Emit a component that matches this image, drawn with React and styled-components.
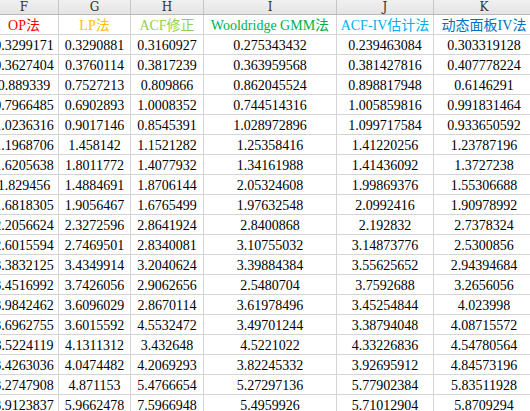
import React from "react";
import styled, { createGlobalStyle } from "styled-components";

const GlobalStyle = createGlobalStyle`
  html, body {
    margin: 0;
    padding: 0;
    background: #ffffff;
  }
  body {
    width: 530px;
    height: 411px;
    overflow: hidden;
  }
`

const columns = [
  { letter: "F", title: "OP法", color: "#ff0000", width: 69 },
  { letter: "G", title: "LP法", color: "#ffc000", width: 72 },
  { letter: "H", title: "ACF修正", color: "#92d050", width: 73 },
  { letter: "I", title: "Wooldridge GMM法", color: "#00b050", width: 133 },
  { letter: "J", title: "ACF-IV估计法", color: "#00b0f0", width: 97 },
  { letter: "K", title: "动态面板IV法", color: "#0070c0", width: 101 },
]

const rows = [
  ["0.3299171", "0.3290881", "0.3160927", "0.275343432", "0.239463084", "0.303319128"],
  ["0.3627404", "0.3760114", "0.3817239", "0.363959568", "0.381427816", "0.407778224"],
  ["0.889339", "0.7527213", "0.809866", "0.862045524", "0.898817948", "0.6146291"],
  ["0.7966485", "0.6902893", "1.0008352", "0.744514316", "1.005859816", "0.991831464"],
  ["1.0236316", "0.9017146", "0.8545391", "1.028972896", "1.099717584", "0.933650592"],
  ["1.1968706", "1.458142", "1.1521282", "1.25358416", "1.41220256", "1.23787196"],
  ["1.6205638", "1.8011772", "1.4077932", "1.34161988", "1.41436092", "1.3727238"],
  ["1.829456", "1.4884691", "1.8706144", "2.05324608", "1.99869376", "1.55306688"],
  ["1.6818305", "1.9056467", "1.6765499", "1.97632548", "2.0992416", "1.90978992"],
  ["2.2056624", "2.3272596", "2.8641924", "2.8400868", "2.192832", "2.7378324"],
  ["2.6015594", "2.7469501", "2.8340081", "3.10755032", "3.14873776", "2.5300856"],
  ["3.3832125", "3.4349914", "3.2040624", "3.39884384", "3.55625652", "2.94394684"],
  ["3.4516992", "3.7426056", "2.9062656", "2.5480704", "3.7592688", "3.2656056"],
  ["3.9842462", "3.6096029", "2.8670114", "3.61978496", "3.45254844", "4.023998"],
  ["3.6962755", "3.6015592", "4.5532472", "3.49701244", "3.38794048", "4.08715572"],
  ["3.5224119", "4.1311312", "3.432648", "4.5221022", "4.33226836", "4.54780564"],
  ["3.4263036", "4.0474482", "4.2069293", "3.82245332", "3.92695912", "4.84573196"],
  ["3.2747908", "4.871153", "5.4766654", "5.27297136", "5.77902384", "5.83511928"],
  ["3.9123837", "5.9662478", "7.5966948", "5.4959926", "5.71012904", "5.8709294"],
]

export default function App () {
  const template = columns.map((c) => `${c.width}px`).join(" ")

  return (
    <>
      <GlobalStyle />
      <Viewport>
        <Sheet $template={template}>
          {columns.map((c) => <ColHead key={c.letter}>{c.letter}</ColHead>)}
          {columns.map((c) => <TitleCell key={c.title} $color={c.color}>{c.title}</TitleCell>)}
          {rows.map((row, r) =>
            row.map((value, i) => <NumCell key={`${r}-${i}`}>{value}</NumCell>)
          )}
        </Sheet>
      </Viewport>
    </>
  )
}

const Viewport = styled.div`
  width: 530px;
  height: 411px;
  overflow: hidden;
  position: relative;
`

const Sheet = styled.div`
  display: grid;
  grid-template-columns: ${(p) => p.$template};
  margin-left: -10px;
  width: max-content;
  font-family: "Liberation Serif", "Noto Sans CJK SC", serif;
`

const Cell = styled.div`
  box-sizing: border-box;
  height: 20px;
  border-right: 1px solid #d4d4d4;
  border-bottom: 1px solid #d4d4d4;
  display: flex;
  align-items: center;
  justify-content: center;
  white-space: nowrap;
  overflow: visible;
  font-size: 14px;
  line-height: 19px;
  padding-top: 1px;
`

const ColHead = styled.div`
  box-sizing: border-box;
  height: 15px;
  background: linear-gradient(#f0f0f0, #e4e4e4);
  border-right: 1px solid #c6c6c6;
  border-bottom: 1px solid #b8b8b8;
  display: flex;
  align-items: center;
  justify-content: center;
  font-family: "DejaVu Serif", "Liberation Serif", serif;
  font-size: 12px;
  line-height: 14px;
  color: #333333;
`

const TitleCell = styled(Cell)`
  color: ${(p) => p.$color};
`

const NumCell = styled(Cell)`
  color: #000000;
`
